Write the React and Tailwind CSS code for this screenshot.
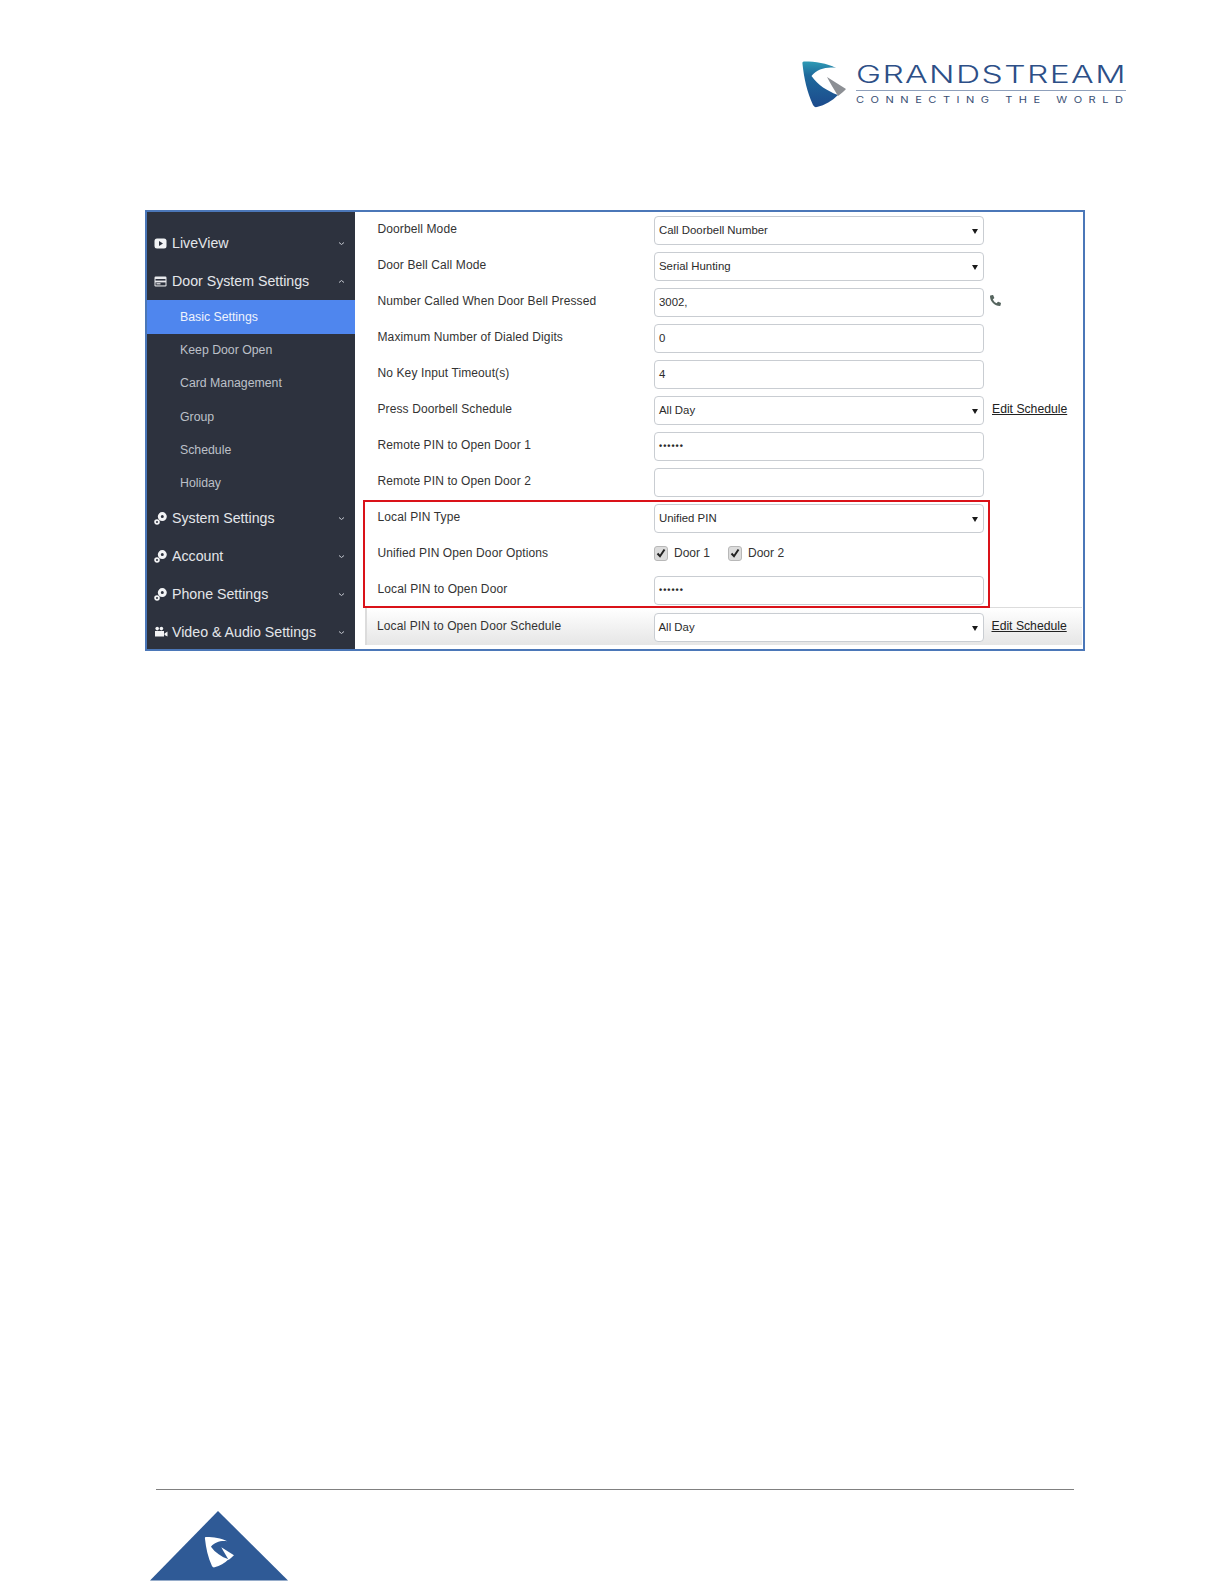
import { FaPhoneAlt } from "react-icons/fa";

const font = "font-['Liberation_Sans',Arial,sans-serif]";

function Chevron({ up }) {
  return (
    <svg width="7" height="5" viewBox="0 0 7 5" className="ml-auto mr-[10px] shrink-0">
      <path d={up ? "M1 3.5 L3.5 1.5 L6 3.5" : "M1 1.5 L3.5 3.5 L6 1.5"} fill="none" stroke="#c4c8d0" strokeWidth="1" />
    </svg>
  );
}

function PlayIcon() {
  return (
    <svg width="13" height="11" viewBox="0 0 13 11">
      <rect x="0.5" y="0.5" width="12" height="10" rx="2.5" fill="#f2f3f5" />
      <path d="M5 3 L9 5.5 L5 8 Z" fill="#2d323e" />
    </svg>
  );
}

function CardIcon() {
  return (
    <svg width="13" height="11" viewBox="0 0 13 11">
      <rect x="0.5" y="0.5" width="12" height="10" rx="1.2" fill="#e8e9ec" />
      <rect x="1.5" y="3" width="10" height="1.6" fill="#2d323e" />
      <rect x="1.5" y="6.4" width="10" height="3" fill="#2d323e" />
      <rect x="2.5" y="7.2" width="4" height="1.2" fill="#e8e9ec" />
    </svg>
  );
}

function GearsIcon() {
  return (
    <svg width="13" height="13" viewBox="0 0 13 13">
      <circle cx="8.3" cy="4.6" r="3" fill="#2d323e" stroke="#f2f3f5" strokeWidth="3" />
      <circle cx="3" cy="10" r="1.9" fill="#2d323e" stroke="#f2f3f5" strokeWidth="1.8" />
    </svg>
  );
}

function CameraIcon() {
  return (
    <svg width="14" height="12" viewBox="0 0 14 12">
      <circle cx="3.2" cy="2.6" r="1.8" fill="#f2f3f5" />
      <circle cx="7.4" cy="2.6" r="1.8" fill="#f2f3f5" />
      <rect x="1" y="5" width="9" height="5.5" fill="#f2f3f5" />
      <path d="M10.5 7.5 L13.5 5.5 V10.5 L10.5 9 Z" fill="#f2f3f5" />
    </svg>
  );
}

function MenuItem({ icon, label, up }) {
  return (
    <div className="h-[38px] flex items-center pl-[7px] shrink-0">
      <span className="w-[18px] flex items-center">{icon}</span>
      <span className="text-[14.2px] text-[#e4e6ea] translate-y-[1px]">{label}</span>
      <Chevron up={up} />
    </div>
  );
}

function SubItem({ label, active, low }) {
  return (
    <div className={`h-[33px] flex items-center pl-[33px] text-[12.3px] shrink-0 ${active ? "bg-[#4f86ee] text-[#eef3fd] h-[34px]" : "text-[#bcc0c8]"} ${low ? "pt-[2px]" : ""}`}>
      {label}
    </div>
  );
}

function Box({ children, select }) {
  return (
    <div className="w-[330px] h-[29px] border border-[#c9cdd2] rounded-[4px] bg-white flex items-center pl-[4px] pr-[5px] text-[11.4px] text-[#2b2b2b]">
      <span>{children}</span>
      {select && (
        <svg width="6" height="6" viewBox="0 0 6 6" className="ml-auto">
          <path d="M0 1 H6 L3 6 Z" fill="#1a1a1a" />
        </svg>
      )}
    </div>
  );
}

function Row({ label, children, extra }) {
  return (
    <div className="h-[36px] flex items-start shrink-0">
      <div className="w-[276.5px] h-[26px] flex items-center text-[12px] tracking-[0.11px] text-[#333]">{label}</div>
      {children}
      {extra}
    </div>
  );
}

function EditLink() {
  return <span className="ml-[8px] mt-[4px] text-[12.2px] text-[#222] underline">Edit Schedule</span>;
}

function Check({ label }) {
  return (
    <div className="flex items-center">
      <div className="w-[14px] h-[15px] rounded-[3px] border border-[#b8b8b8] bg-[#dcdcdc] flex items-center justify-center">
        <svg width="10" height="10" viewBox="0 0 10 10">
          <path d="M1.5 5.5 L4 8.2 L8.5 1.5" fill="none" stroke="#222" strokeWidth="2" />
        </svg>
      </div>
      <span className="ml-[6px] text-[12px] text-[#333]">{label}</span>
    </div>
  );
}

function Dots() {
  return <span className="inline-block -translate-y-[1px] text-[9px] font-bold tracking-[1px]">••••••</span>;
}

function Mark() {
  return (
    <path d="M5.5 8 C5 6 6 5.5 8 5.5 C18 5.5 30 7 39 12 C30 10.5 20 13 14.5 20 C21 29 30 35 41 39 C35 45 28 49 20 51 C18 51.5 17 50.5 16 49 C10 36 7 22 5.5 8 Z" />
  );
}

export default function App() {
  return (
    <div className={`w-[1224px] h-[1584px] bg-white flex flex-col overflow-hidden ${font}`}>
      {/* header logo */}
      <div className="h-[210px] shrink-0 flex items-start justify-end pr-[98px] pt-[63px]">
        <div className="flex items-start">
          <svg width="56" height="56" viewBox="0 0 56 56" className="-mt-[7px] mr-[3px]">
            <defs>
              <linearGradient id="gsBlue" x1="0" y1="0" x2="0" y2="1">
                <stop offset="0" stopColor="#2f9bb5" />
                <stop offset="0.3" stopColor="#1f6a9c" />
                <stop offset="1" stopColor="#1c4a8c" />
              </linearGradient>
            </defs>
            <g fill="url(#gsBlue)"><Mark /></g>
            <path d="M30 21 L49 33 C47 35 44 38 41 40 C37 33 33 27 30 21 Z" fill="#8c8f94" />
          </svg>
          <div className="w-[270px] flex flex-col">
            <div className="text-[24px] leading-[24px] font-['Inter',sans-serif] font-light text-[#2d4f87] tracking-[1px] whitespace-nowrap origin-left scale-x-[1.4]">GRANDSTREAM</div>
            <div className="h-px bg-[#8fa0bb] mt-[3px]" />
            <div className="mt-[4px] text-[8.5px] leading-[10px] font-['Inter',sans-serif] text-[#3a4f74] tracking-[5px] whitespace-nowrap origin-left scale-x-[1.3]">CONNECTING THE WORLD</div>
          </div>
        </div>
      </div>

      {/* settings screenshot */}
      <div className="ml-[145px] w-[940px] h-[441px] shrink-0 border-2 border-[#4b77b8] flex overflow-hidden">
        <div className="w-[208px] shrink-0 bg-[#2d323e] flex flex-col pt-[12px] overflow-hidden">
          <MenuItem icon={<PlayIcon />} label="LiveView" />
          <MenuItem icon={<CardIcon />} label="Door System Settings" up />
          <SubItem label="Basic Settings" active />
          <SubItem label="Keep Door Open" />
          <SubItem label="Card Management" />
          <SubItem label="Group" low />
          <SubItem label="Schedule" low />
          <SubItem label="Holiday" low />
          <MenuItem icon={<GearsIcon />} label="System Settings" />
          <MenuItem icon={<GearsIcon />} label="Account" />
          <MenuItem icon={<GearsIcon />} label="Phone Settings" />
          <MenuItem icon={<CameraIcon />} label="Video & Audio Settings" />
        </div>

        <div className="flex-1 flex flex-col pl-[22.5px] pt-[4px]">
          <Row label="Doorbell Mode"><Box select>Call Doorbell Number</Box></Row>
          <Row label="Door Bell Call Mode"><Box select>Serial Hunting</Box></Row>
          <Row
            label="Number Called When Door Bell Pressed"
            extra={<FaPhoneAlt className="ml-[6px] mt-[7px] text-[11px] text-[#56655f]" />}
          >
            <Box>3002,</Box>
          </Row>
          <Row label="Maximum Number of Dialed Digits"><Box>0</Box></Row>
          <Row label="No Key Input Timeout(s)"><Box>4</Box></Row>
          <Row label="Press Doorbell Schedule" extra={<EditLink />}><Box select>All Day</Box></Row>
          <Row label="Remote PIN to Open Door 1"><Box><Dots /></Box></Row>
          <Row label="Remote PIN to Open Door 2"><Box /></Row>

          <div className="relative">
            <Row label="Local PIN Type"><Box select>Unified PIN</Box></Row>
            <Row label="Unified PIN Open Door Options">
              <div className="h-[26px] flex items-center gap-[18px]">
                <Check label="Door 1" />
                <Check label="Door 2" />
              </div>
            </Row>
            <Row label="Local PIN to Open Door"><Box><Dots /></Box></Row>
            <div className="absolute left-[-14.5px] top-[-4px] w-[627px] h-[108px] border-2 border-[#da1219] z-10" />
          </div>

          <div className="-ml-[12.5px] -mt-[5px] mr-[1px] pl-[10px] pt-[5px] h-[38px] border-l-2 border-t border-[#dcdcdc] bg-gradient-to-b from-white to-[#e6e6e6] flex items-start">
            <div className="w-[276.5px] h-[26px] flex items-center text-[12px] tracking-[0.11px] text-[#333]">Local PIN to Open Door Schedule</div>
            <Box select>All Day</Box>
            <EditLink />
          </div>
        </div>
      </div>

      {/* footer */}
      <div className="ml-[156px] mt-[838px] w-[918px] h-px bg-[#808080] shrink-0" />
      <svg width="138" height="70" viewBox="0 0 138 70" className="ml-[150px] mt-[21px] shrink-0">
        <path d="M68 0 L138 69.5 H0 Z" fill="#2f5a96" />
        <g transform="translate(51.3 22.3) scale(0.667)" fill="#ffffff">
          <Mark />
          <path d="M30 21 L49 33 C47 35 44 38 41 40 C37 33 33 27 30 21 Z" />
        </g>
      </svg>
    </div>
  );
}
